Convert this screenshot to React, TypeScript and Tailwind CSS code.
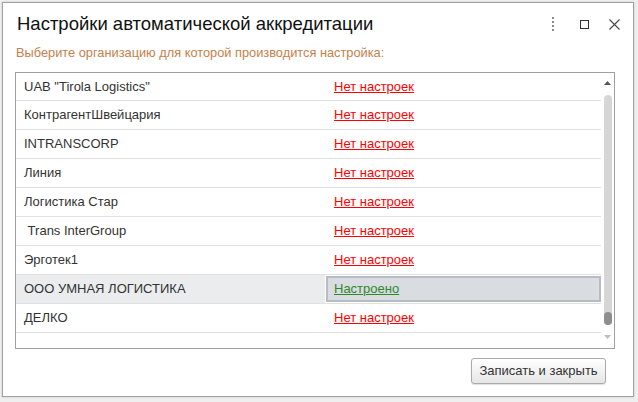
import React from "react";

const ROWS = [
  { name: 'UAB "Tirola Logistics"', ok: false },
  { name: "КонтрагентШвейцария", ok: false },
  { name: "INTRANSCORP", ok: false },
  { name: "Линия", ok: false },
  { name: "Логистика Стар", ok: false },
  { name: "\u00a0Trans InterGroup", ok: false },
  { name: "Эрготек1", ok: false },
  { name: "ООО УМНАЯ ЛОГИСТИКА", ok: true },
  { name: "ДЕЛКО", ok: false },
];

export default function App() {
  return (
    <div
      className="w-[638px] h-[402px] bg-[#efefef] pl-[2px] pt-[2px] overflow-hidden"
      style={{ fontFamily: '"Liberation Sans", Arial, sans-serif' }}
    >
      <div className="w-[632px] h-[395px] border border-[#a0a0a0] bg-white flex flex-col shadow-[0_0_2px_rgba(0,0,0,0.15)]">
        {/* Header */}
        <div className="h-[42px] flex items-center pl-[14px] pr-[13px]">
          <span className="text-[18.5px] leading-[24px] text-[#111]">
            Настройки автоматической аккредитации
          </span>
          <div className="ml-auto flex items-center">
            <div className="flex flex-col gap-[2px]">
              <span className="w-[2px] h-[2px] bg-[#8a8a8a]" />
              <span className="w-[2px] h-[2px] bg-[#8a8a8a]" />
              <span className="w-[2px] h-[2px] bg-[#8a8a8a]" />
              <span className="w-[2px] h-[2px] bg-[#8a8a8a]" />
            </div>
            <div className="ml-[26px] w-[9px] h-[9px] border border-[#333]" />
            <svg className="ml-[20px]" width="11" height="11" viewBox="0 0 11 11">
              <path d="M0.5 0.5 L10.5 10.5 M10.5 0.5 L0.5 10.5" stroke="#444" strokeWidth="1.1" />
            </svg>
          </div>
        </div>

        {/* Subtitle */}
        <div className="h-[16px] pl-[13px] text-[12.8px] leading-[16px] text-[#c4814b]">
          Выберите организацию для которой производится настройка:
        </div>

        {/* Table */}
        <div className="mt-[11px] ml-[12px] w-[600px] h-[277px] border border-[#a0a0a0] flex">
          <div className="w-[585px] flex flex-col">
            {ROWS.map((r, i) => (
              <div
                key={i}
                className={
                  (i === 0 ? "h-[28px] " : "h-[29px] ") +
                  "flex border-b border-[#e2e2e2] text-[13px]"
                }
              >
                <div
                  className={
                    "w-[309px] flex items-center pl-[8px] text-[#333] " +
                    (r.ok ? "bg-[#ebecee]" : "")
                  }
                >
                  {r.name}
                </div>
                {r.ok ? (
                  <div className="flex-1 pl-[1px] py-[1px] flex">
                    <div className="flex-1 flex items-center pl-[6px] border-2 border-[#b6bcc4] bg-[#d9dce0]">
                      <span className="underline text-[#2a8a2a]">Настроено</span>
                    </div>
                  </div>
                ) : (
                  <div className="flex-1 flex items-center pl-[9px]">
                    <span className="underline text-[#ff0000]">Нет настроек</span>
                  </div>
                )}
              </div>
            ))}
          </div>
          <div className="w-[13px] flex flex-col items-center">
            <svg className="mt-[8px]" width="7" height="4" viewBox="0 0 7 4">
              <path d="M0 4 L3.5 0 L7 4 Z" fill="#555" />
            </svg>
            <div className="mt-[10px] w-[8px] h-[230px] rounded-full bg-[#d6d6d6] flex flex-col justify-end">
              <div className="w-[8px] h-[13px] rounded-full bg-[#8e8e8e]" />
            </div>
            <svg className="mt-[10px]" width="7" height="4" viewBox="0 0 7 4">
              <path d="M0 0 L3.5 4 L7 0 Z" fill="#bdbdbd" />
            </svg>
          </div>
        </div>

        {/* Footer */}
        <div className="mt-[9px] flex justify-end pr-[27px]">
          <button className="w-[135px] h-[26px] border border-[#aaaaaa] rounded-[3px] bg-gradient-to-b from-white to-[#e6e6e6] text-[13px] text-[#333] shadow-[0_1px_1px_rgba(0,0,0,0.12)]">
            Записать и закрыть
          </button>
        </div>
      </div>
    </div>
  );
}
